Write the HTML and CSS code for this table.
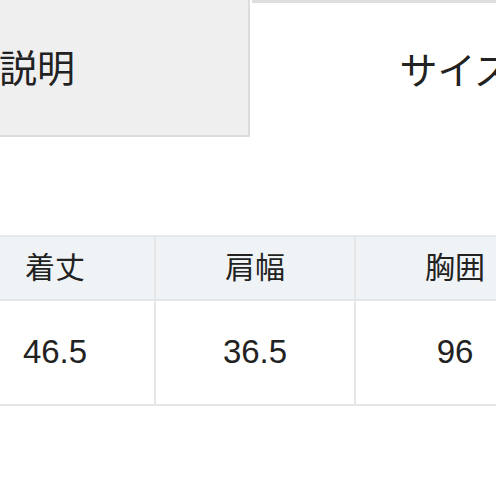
FILE: index.html
```html
<!DOCTYPE html>
<html lang="ja">
<head>
<meta charset="utf-8">
<link rel="stylesheet" href="styles.css">
</head>
<body>
<div class="page">
  <div class="tabs">
    <div class="tab tab-off">商品説明</div>
    <div class="tab tab-on">サイズ</div>
  </div>
  <div class="sizes">
    <div class="cell head">着丈</div>
    <div class="cell head">肩幅</div>
    <div class="cell head">胸囲</div>
    <div class="cell val">46.5</div>
    <div class="cell val">36.5</div>
    <div class="cell val">96</div>
  </div>
</div>
</body>
</html>
```
FILE: styles.css
```css
html, body {
  margin: 0;
  padding: 0;
  background: #ffffff;
}
.page {
  width: 496px;
  height: 496px;
  overflow: hidden;
  font-family: "Liberation Sans", "Noto Sans CJK JP", sans-serif;
  color: #222222;
}
.tabs {
  display: flex;
  height: 137px;
  margin-left: -250px;
}
.tab {
  flex: none;
  display: flex;
  align-items: center;
  justify-content: center;
  font-family: "Noto Sans CJK JP", sans-serif;
  font-size: 38px;
  box-sizing: border-box;
}
.tab-off {
  width: 500px;
  background: #efefef;
  border-right: 2px solid #dcdcdc;
  border-bottom: 2px solid #dcdcdc;
  padding-bottom: 4px;
}
.tab-on {
  width: 408px;
  margin-left: 2px;
  background: #ffffff;
  border-top: 3px solid #dedede;
  padding-bottom: 6px;
}
.sizes {
  display: grid;
  grid-template-columns: 200px 200px 200px;
  grid-template-rows: 64px 103px;
  margin-top: 98px;
  margin-left: -44px;
  border-top: 2px solid #e6e8ea;
  border-bottom: 2px solid #e4e6e8;
  width: 600px;
}
.cell {
  display: flex;
  align-items: center;
  justify-content: center;
  box-sizing: border-box;
  border-right: 2px solid #e4e6e8;
}
.head {
  background: #f0f3f5;
  border-bottom: 2px solid #e4e6e8;
  font-family: "Noto Sans CJK JP", sans-serif;
  font-size: 30px;
  padding-bottom: 6px;
}
.val {
  font-size: 33px;
  padding-bottom: 2px;
}
```
